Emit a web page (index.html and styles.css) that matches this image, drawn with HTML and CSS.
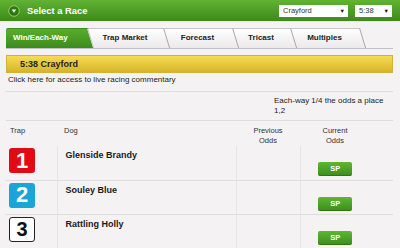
FILE: index.html
```html
<!DOCTYPE html>
<html>
<head>
    <title>Select a Race</title>
    <link rel="stylesheet" href="styles.css">
</head>
<body>
    <div class="race-header">
        <svg class="toggle" width="12" height="12" viewBox="0 0 12 12">
            <circle cx="6" cy="6" r="5.3" fill="#2e7812" stroke="#9ad46a" stroke-width="0.9"/>
            <polygon points="3.7,4.6 8.3,4.6 6,7.8" fill="#fff"/>
        </svg>
        <span class="title">Select a Race</span>
        <div class="pickers">
            <div class="picker picker-track">Crayford<span class="arrow">&#9660;</span></div>
            <div class="picker picker-time">5:38<span class="arrow">&#9660;</span></div>
        </div>
    </div>

    <div class="content">
        <div class="tabs">
            <div class="tab tab-win active">Win/Each-Way</div>
            <div class="tab tab-trap">Trap Market</div>
            <div class="tab tab-forecast">Forecast</div>
            <div class="tab tab-tricast">Tricast</div>
            <div class="tab tab-multiples">Multiples</div>
        </div>

        <div class="race-bar">5:38 Crayford</div>

        <div class="commentary">Click here for access to live racing commentary</div>

        <div class="terms"><span>Each-way 1/4 the odds a place 1,2</span></div>

        <table class="runners">
            <colgroup>
                <col class="col-trap">
                <col class="col-dog">
                <col class="col-prev">
                <col class="col-current">
            </colgroup>
            <thead>
                <tr>
                    <th class="trap">Trap</th>
                    <th class="dog">Dog</th>
                    <th class="odds">Previous<br>Odds</th>
                    <th class="odds current">Current<br>Odds</th>
                </tr>
            </thead>
            <tbody>
                <tr>
                    <td class="trap"><span class="badge badge-1">1</span></td>
                    <td class="dog">Glenside Brandy</td>
                    <td class="odds"></td>
                    <td class="odds current"><span class="sp">SP</span></td>
                </tr>
                <tr>
                    <td class="trap"><span class="badge badge-2">2</span></td>
                    <td class="dog">Souley Blue</td>
                    <td class="odds"></td>
                    <td class="odds current"><span class="sp">SP</span></td>
                </tr>
                <tr>
                    <td class="trap"><span class="badge badge-3">3</span></td>
                    <td class="dog">Rattling Holly</td>
                    <td class="odds"></td>
                    <td class="odds current"><span class="sp">SP</span></td>
                </tr>
            </tbody>
        </table>
    </div>
</body>
</html>
```

FILE: styles.css
```css
body {
    margin: 0;
    background-color: #f4f2f2;
    font-family: "Liberation Sans", Arial, sans-serif;
    color: #222;
}

/* green race picker bar */
.race-header {
    height: 21px;
    display: flex;
    align-items: center;
    padding: 0 8px 0 8px;
    background: linear-gradient(#62b234, #4a9a24 60%, #3d8a1b);
    border-bottom: 1px solid #dfe9d8;
}

.toggle {
    display: block;
}

.title {
    margin-left: 7px;
    color: #fff;
    font-weight: bold;
    font-size: 9.4px;
}

.pickers {
    margin-left: auto;
    display: flex;
    gap: 7px;
}

.picker {
    height: 12px;
    display: flex;
    align-items: center;
    justify-content: space-between;
    padding: 0 3px 0 4px;
    background-color: #fff;
    font-size: 7.5px;
    color: #333;
    box-sizing: border-box;
}

.picker-track {
    width: 69px;
}

.picker-time {
    width: 37px;
}

.arrow {
    font-size: 5.5px;
    color: #111;
}

.content {
    padding: 0 7px 0 6px;
}

/* tabs */
.tabs {
    margin-top: 6px;
    display: flex;
    border-bottom: 1px solid #c2c0c0;
}

.tab {
    position: relative;
    height: 20px;
    line-height: 20px;
    box-sizing: border-box;
    font-size: 8px;
    font-weight: bold;
    text-align: center;
    color: #222;
    background: linear-gradient(#ffffff, #ebe9e9);
    border-top: 1px solid #c9c7c7;
    line-height: 18px;
}

.tab::after {
    content: '';
    position: absolute;
    top: -1px;
    bottom: 0;
    right: -1px;
    width: 8px;
    background: inherit;
    border-top: 1px solid #c9c7c7;
    border-right: 1px solid #a9a7a7;
    transform: skewX(17deg);
    transform-origin: top;
    z-index: 1;
}

.tab.active {
    color: #fff;
    background: linear-gradient(#5aac2d, #3c8c1c);
    border-top-color: #3c8c1c;
    border-top-left-radius: 2px;
    text-align: left;
    padding-left: 7px;
}

.tab.active::after {
    border-color: #3c8c1c;
    border-right-color: #c9c7c7;
}

.tab-win { width: 81px; }
.tab-trap { width: 76px; }
.tab-forecast { width: 69px; }
.tab-tricast { width: 58px; }
.tab-multiples { width: 69px; }

/* yellow race bar */
.race-bar {
    margin-top: 6px;
    height: 18px;
    box-sizing: border-box;
    padding-left: 13px;
    line-height: 16px;
    font-size: 9px;
    font-weight: bold;
    color: #222;
    background: linear-gradient(#f3dd55, #e4c53a 60%, #d6b428);
    border: 1px solid #d2b33a;
}

.commentary {
    padding: 2px 0 7px 2px;
    height: 9px;
    line-height: 9px;
    font-size: 8px;
    color: #222;
    border-bottom: 1px solid #e2dddd;
}

.terms {
    display: flex;
    justify-content: flex-end;
    padding: 4px 0 4px 0;
    font-size: 8px;
    line-height: 10px;
    color: #222;
    border-bottom: 1px solid #e2dddd;
}

.terms span {
    width: 119px;
}

/* runners table */
.runners {
    width: 100%;
    border-collapse: collapse;
    table-layout: fixed;
}

.col-trap { width: 51px; }
.col-dog { width: 179px; }
.col-prev { width: 64px; }

th {
    height: 24px;
    padding: 5px 0 0 0;
    vertical-align: top;
    font-size: 7.5px;
    font-weight: normal;
    line-height: 10px;
    color: #333;
    text-align: left;
    box-sizing: border-box;
}

th.trap {
    padding-left: 4px;
}

th.dog {
    padding-left: 7px;
}

th.odds {
    text-align: center;
}

th.current, td.current {
    padding-right: 23px;
}

td {
    height: 34px;
    padding: 0;
    vertical-align: top;
    box-sizing: border-box;
    border-bottom: 1px solid #e2dddd;
}

td.trap {
    padding: 2px 0 0 3px;
}

td.dog {
    padding: 4px 0 0 8px;
    font-size: 9px;
    font-weight: bold;
    color: #1a1a1a;
    border-left: 1px solid #e8e4e4;
}

td.odds {
    text-align: center;
    border-left: 1px solid #e8e4e4;
}

td.current {
    padding-top: 11px;
}

.badge {
    display: flex;
    align-items: center;
    justify-content: center;
    width: 26px;
    height: 25px;
    box-sizing: border-box;
    border-radius: 3px;
    font-size: 22px;
    font-weight: bold;
    color: #fff;
}

.badge-1 {
    background-color: #e20a16;
}

.badge-2 {
    background-color: #1aa5d7;
}

.badge-3 {
    background-color: #fff;
    color: #111;
    border: 1.5px solid #222;
    font-size: 20px;
}

.sp {
    display: inline-block;
    width: 34px;
    height: 14px;
    line-height: 14px;
    border-radius: 2px;
    font-size: 7.5px;
    font-weight: bold;
    color: #fff;
    background: linear-gradient(#5db733, #3e901d);
    border-bottom: 1px solid #2f7414;
    box-sizing: border-box;
}
```
